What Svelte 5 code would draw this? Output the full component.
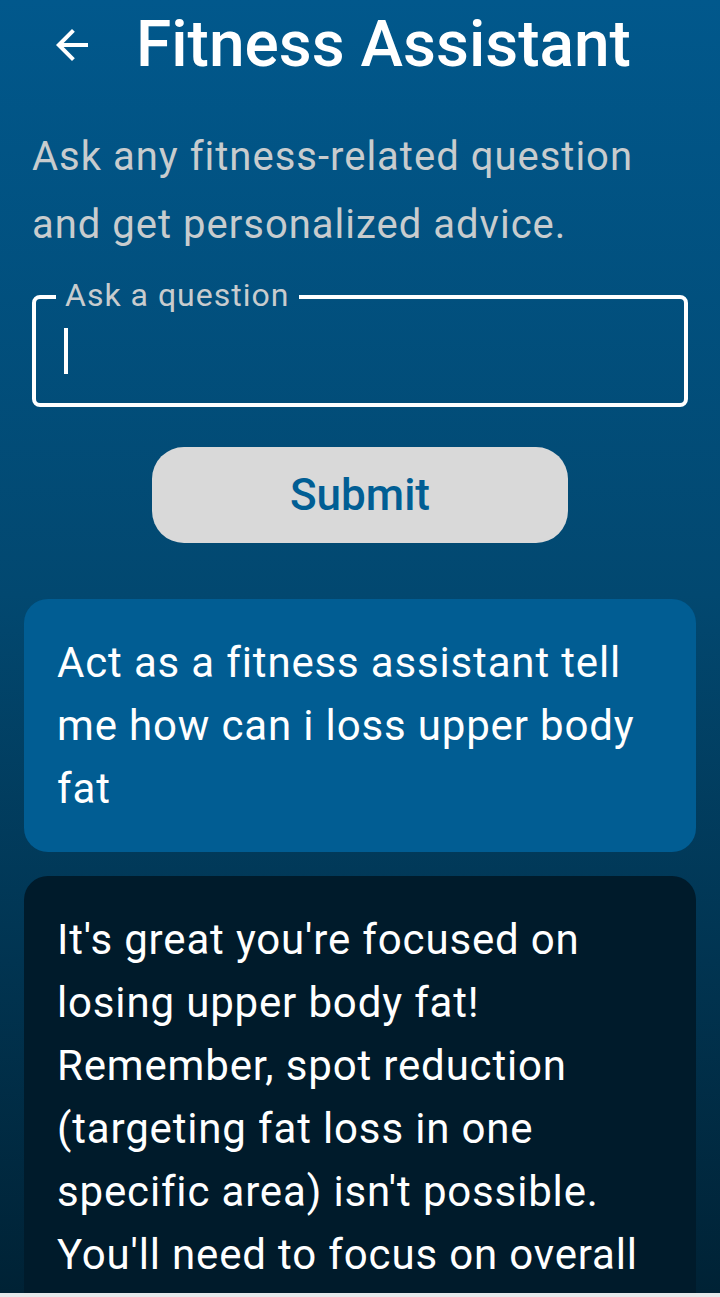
<script>
  let question = $state('');
  const messages = [
    { from: 'user', text: 'Act as a fitness assistant tell me how can i loss upper body fat' },
    { from: 'assistant', text: "It's great you're focused on losing upper body fat! Remember, spot reduction (targeting fat loss in one specific area) isn't possible. You'll need to focus on overall" }
  ];
</script>

<main>
  <header>
    <button class="back" aria-label="Back">
      <svg viewBox="0 0 24 24"><path d="M20 11H7.83l5.59-5.59L12 4l-8 8 8 8 1.41-1.41L7.83 13H20z" /></svg>
    </button>
    <h1>Fitness Assistant</h1>
  </header>
  <p class="intro">Ask any fitness-related question and get personalized advice.</p>
  <form onsubmit={(e) => e.preventDefault()}>
    <fieldset>
      <legend><label for="question">Ask a question</label></legend>
      <div class="entry">
        <span class="caret" aria-hidden="true"></span>
        <input id="question" type="text" bind:value={question} />
      </div>
    </fieldset>
    <button class="submit" type="submit">Submit</button>
  </form>
  <section class="chat">
    {#each messages as message}
      <p class="message {message.from}">{message.text}</p>
    {/each}
  </section>
</main>

<style>
  :global(body) {
    margin: 0;
    background: #e6e9eb;
    font-family: Roboto, sans-serif;
  }
  main {
    display: flex;
    flex-direction: column;
    box-sizing: border-box;
    min-height: calc(100vh - 4px);
    color: #fff;
    background: linear-gradient(#01588c, #024870 46%, #002235);
  }
  header {
    display: flex;
    align-items: center;
    height: 90px;
    padding: 0 48px;
    gap: 40px;
  }
  button {
    border: 0;
    font-family: inherit;
    cursor: pointer;
  }
  .back {
    display: flex;
    padding: 0;
    background: none;
  }
  .back svg {
    width: 48px;
    height: 48px;
    fill: #fff;
  }
  h1 {
    margin: 0;
    font-size: 64px;
    line-height: 80px;
    font-weight: 500;
    white-space: nowrap;
  }
  .intro {
    margin: 33px 32px 0;
    font-size: 40px;
    line-height: 68px;
    letter-spacing: 1px;
    color: #c8ccce;
  }
  form {
    display: flex;
    flex-direction: column;
    padding: 17px 32px 0;
  }
  fieldset {
    min-width: 0;
    margin: 0;
    padding: 0 20px 19px;
    border: 4px solid #fff;
    border-radius: 8px;
  }
  legend {
    padding: 0 10px 4px 9px;
    font-size: 32px;
    line-height: 38px;
    letter-spacing: 1px;
    color: #c8ccce;
  }
  .entry {
    display: flex;
    align-items: center;
    height: 66px;
    padding: 0 8px;
  }
  .caret {
    width: 4px;
    height: 46px;
    background: #fff;
  }
  input {
    flex: 1;
    min-width: 0;
    border: 0;
    outline: 0;
    padding: 0;
    background: none;
    color: inherit;
    font: 40px Roboto, sans-serif;
  }
  .submit {
    align-self: center;
    width: 416px;
    max-width: 100%;
    height: 96px;
    margin-top: 40px;
    border-radius: 32px;
    background: #d9d9d9;
    color: #015e94;
    font-size: 44px;
    font-weight: 500;
  }
  .chat {
    display: flex;
    flex: 1;
    flex-direction: column;
    gap: 24px;
    padding: 56px 24px 0;
  }
  .message {
    margin: 0;
    padding: 32px 33px;
    border-radius: 24px;
    font-size: 42px;
    line-height: 63px;
    letter-spacing: 0.02em;
  }
  .user {
    background: #015d93;
  }
  .assistant {
    flex: 1;
    padding-bottom: 0;
    border-radius: 24px 24px 0 0;
    background: #001b2b;
  }
</style>
